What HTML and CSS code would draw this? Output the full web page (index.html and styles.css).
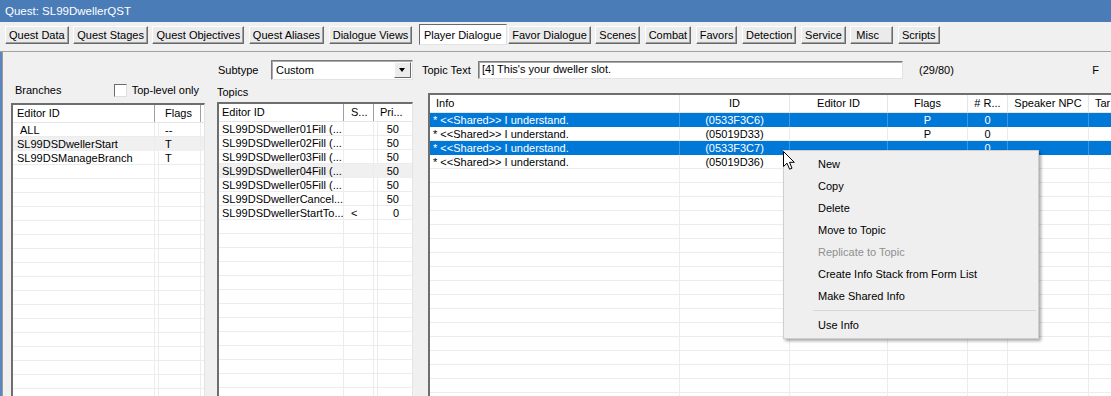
FILE: index.html
```html
<!DOCTYPE html>
<html lang="en">

<head>
    <meta charset="UTF-8" />
    <link rel="stylesheet" href="styles.css">
    <title>Quest: SL99DwellerQST</title>
</head>

<body>
    <div class="titlebar">Quest: SL99DwellerQST</div>

    <div class="tabs">
        <button class="tab">Quest Data</button>
        <button class="tab">Quest Stages</button>
        <button class="tab">Quest Objectives</button>
        <button class="tab">Quest Aliases</button>
        <button class="tab">Dialogue Views</button>
        <button class="tab active">Player Dialogue</button>
        <button class="tab">Favor Dialogue</button>
        <button class="tab">Scenes</button>
        <button class="tab">Combat</button>
        <button class="tab">Favors</button>
        <button class="tab">Detection</button>
        <button class="tab">Service</button>
        <button class="tab misc">Misc</button>
        <button class="tab">Scripts</button>
    </div>

    <div class="page">
        <!-- branches -->
        <div class="col branches">
            <div class="branch-head">
                <span>Branches</span>
                <label class="check"><span class="box"></span>Top-level only</label>
            </div>
            <div class="list branch-list">
                <div class="list-head">
                    <div class="hcell b-eid">Editor ID</div>
                    <div class="hcell b-flags">Flags</div>
                </div>
                <div class="list-body">
                    <div class="row"><span class="cell b-eid indent">ALL</span><span class="cell b-flags">--</span></div>
                    <div class="row hover"><span class="cell b-eid">SL99DSDwellerStart</span><span class="cell b-flags">T</span></div>
                    <div class="row"><span class="cell b-eid">SL99DSManageBranch</span><span class="cell b-flags">T</span></div>
                </div>
            </div>
        </div>

        <!-- topics -->
        <div class="col topics">
            <div class="subtype">
                <span class="subtype-label">Subtype</span>
                <div class="select">
                    <span>Custom</span>
                    <span class="arrow"></span>
                </div>
            </div>
            <div class="topics-label">Topics</div>
            <div class="list topic-list">
                <div class="list-head">
                    <div class="hcell t-eid">Editor ID</div>
                    <div class="hcell t-s">S...</div>
                    <div class="hcell t-pri">Pri...</div>
                </div>
                <div class="list-body">
                    <div class="row"><span class="cell t-eid">SL99DSDweller01Fill (...</span><span class="cell t-s"></span><span class="cell t-pri">50</span></div>
                    <div class="row"><span class="cell t-eid">SL99DSDweller02Fill (...</span><span class="cell t-s"></span><span class="cell t-pri">50</span></div>
                    <div class="row"><span class="cell t-eid">SL99DSDweller03Fill (...</span><span class="cell t-s"></span><span class="cell t-pri">50</span></div>
                    <div class="row hover"><span class="cell t-eid">SL99DSDweller04Fill (...</span><span class="cell t-s"></span><span class="cell t-pri">50</span></div>
                    <div class="row"><span class="cell t-eid">SL99DSDweller05Fill (...</span><span class="cell t-s"></span><span class="cell t-pri">50</span></div>
                    <div class="row"><span class="cell t-eid">SL99DSDwellerCancel...</span><span class="cell t-s"></span><span class="cell t-pri">50</span></div>
                    <div class="row"><span class="cell t-eid">SL99DSDwellerStartTo...</span><span class="cell t-s">&lt;</span><span class="cell t-pri">0</span></div>
                </div>
            </div>
        </div>

        <!-- infos -->
        <div class="col infos">
            <div class="topic-text">
                <span class="topic-label">Topic Text</span>
                <div class="textbox">[4] This's your dweller slot.</div>
                <span class="count">(29/80)</span>
                <span class="cut">F</span>
            </div>
            <div class="list info-list">
                <div class="list-head">
                    <div class="hcell i-info">Info</div>
                    <div class="hcell i-id center">ID</div>
                    <div class="hcell i-eid center">Editor ID</div>
                    <div class="hcell i-flags center">Flags</div>
                    <div class="hcell i-resp center"># R...</div>
                    <div class="hcell i-npc center">Speaker NPC</div>
                    <div class="hcell i-tar">Tar</div>
                </div>
                <div class="list-body">
                    <div class="row selected">
                        <span class="cell i-info">* &lt;&lt;Shared&gt;&gt; I understand.</span>
                        <span class="cell i-id center">(0533F3C6)</span>
                        <span class="cell i-eid"></span>
                        <span class="cell i-flags center">P</span>
                        <span class="cell i-resp center">0</span>
                        <span class="cell i-npc"></span>
                        <span class="cell i-tar"></span>
                    </div>
                    <div class="row">
                        <span class="cell i-info">* &lt;&lt;Shared&gt;&gt; I understand.</span>
                        <span class="cell i-id center">(05019D33)</span>
                        <span class="cell i-eid"></span>
                        <span class="cell i-flags center">P</span>
                        <span class="cell i-resp center">0</span>
                        <span class="cell i-npc"></span>
                        <span class="cell i-tar"></span>
                    </div>
                    <div class="row selected">
                        <span class="cell i-info">* &lt;&lt;Shared&gt;&gt; I understand.</span>
                        <span class="cell i-id center">(0533F3C7)</span>
                        <span class="cell i-eid"></span>
                        <span class="cell i-flags center"></span>
                        <span class="cell i-resp center">0</span>
                        <span class="cell i-npc"></span>
                        <span class="cell i-tar"></span>
                    </div>
                    <div class="row">
                        <span class="cell i-info">* &lt;&lt;Shared&gt;&gt; I understand.</span>
                        <span class="cell i-id center">(05019D36)</span>
                        <span class="cell i-eid"></span>
                        <span class="cell i-flags center">P</span>
                        <span class="cell i-resp center">0</span>
                        <span class="cell i-npc"></span>
                        <span class="cell i-tar"></span>
                    </div>
                </div>
            </div>
        </div>
    </div>

    <!-- right click menu -->
    <ul class="menu">
        <li>New</li>
        <li>Copy</li>
        <li>Delete</li>
        <li>Move to Topic</li>
        <li class="disabled">Replicate to Topic</li>
        <li>Create Info Stack from Form List</li>
        <li>Make Shared Info</li>
        <li class="sep"></li>
        <li>Use Info</li>
    </ul>

    <svg class="cursor" width="14" height="21" viewBox="0 0 14 21">
        <path d="M1.5 1.5 L1.5 16.5 L5 13.2 L7.6 19.2 L10 18.2 L7.5 12.3 L12.3 12.3 Z" fill="#fff" stroke="#000"
            stroke-width="1" stroke-linejoin="miter" />
    </svg>
</body>

</html>
```

FILE: styles.css
```css
* {
    margin: 0;
    padding: 0;
    box-sizing: border-box;
}

body {
    position: relative;
    width: 1111px;
    height: 396px;
    overflow: hidden;
    background: #f0f0f0;
    font-family: "Liberation Sans", Arial, sans-serif;
    font-size: 11px;
    color: #000;
}

.titlebar {
    height: 22px;
    line-height: 22px;
    padding-left: 5px;
    background: #4a7cb8;
    color: #fff;
    font-size: 11.5px;
}

/* tab buttons */

.tabs {
    display: flex;
    align-items: flex-start;
    gap: 4.6px;
    height: 30px;
    padding: 4px 0 0 5px;
    border-bottom: 1px solid #a0a0a0;
}

.tab {
    flex-shrink: 0;
    height: 18px;
    padding: 0 3px;
    font-family: inherit;
    font-size: 11px;
    color: #000;
    background: #ebebeb;
    border: 1px solid;
    border-color: #fff #696969 #696969 #fff;
    box-shadow: inset -1px -1px #a0a0a0;
    white-space: nowrap;
}

.tab.active {
    height: 21px;
    margin: -2px -3px 0 2px;
    padding: 0 4px;
    background: #fff;
    border-color: #696969 #e3e3e3 #e3e3e3 #696969;
    box-shadow: none;
}

.tab.misc {
    width: 43px;
    text-align: left;
    padding-left: 5px;
}

/* main area */

.page {
    display: flex;
    height: 344px;
    padding-left: 9px;
    border-left: 2px solid #5b86bd;
    box-shadow: inset 1px 0 #9a9a9a;
}

.col {
    display: flex;
    flex-direction: column;
    flex-shrink: 0;
}

.branches {
    width: 194px;
    margin-right: 12px;
    padding-top: 30px;
}

.branch-head {
    display: flex;
    justify-content: space-between;
    align-items: center;
    height: 16px;
    margin-bottom: 5px;
    padding: 0 6px 0 4px;
}

.check {
    display: flex;
    align-items: center;
    gap: 5px;
}

.box {
    width: 13px;
    height: 13px;
    background: #fff;
    border: 1px solid;
    border-color: #6b6b6b #dedede #dedede #6b6b6b;
}

.topics {
    width: 196px;
    padding-top: 8px;
}

.subtype {
    display: flex;
    align-items: center;
    height: 20px;
}

.subtype-label {
    width: 54px;
    padding-left: 1px;
}

.select {
    display: flex;
    justify-content: space-between;
    align-items: center;
    width: 142px;
    height: 20px;
    padding-left: 4px;
    background: #fff;
    border: 1px solid;
    border-color: #7a7a7a #e3e3e3 #e3e3e3 #7a7a7a;
    box-shadow: inset 1px 1px #a9a9a9;
}

.arrow {
    position: relative;
    width: 17px;
    height: 16px;
    margin-right: 1px;
    background: #ececec;
    border: 1px solid;
    border-color: #fff #696969 #696969 #fff;
}

.arrow::after {
    content: "";
    position: absolute;
    left: 4px;
    top: 5px;
    border-left: 3.5px solid transparent;
    border-right: 3.5px solid transparent;
    border-top: 4px solid #000;
}

.topics-label {
    height: 22px;
    line-height: 24px;
}

.infos {
    flex: 1 1 0;
    min-width: 0;
    margin-left: 9px;
    padding-top: 9px;
}

.topic-text {
    display: flex;
    align-items: center;
    height: 17px;
    margin-bottom: 15px;
}

.topic-label {
    width: 56px;
}

.textbox {
    width: 425px;
    height: 18px;
    line-height: 15px;
    padding-left: 3px;
    background: #fff;
    border: 1px solid;
    border-color: #7a7a7a #e3e3e3 #e3e3e3 #7a7a7a;
    box-shadow: inset 1px 1px #a9a9a9;
}

.count {
    margin-left: 16px;
}

.cut {
    margin-left: auto;
    margin-right: 12px;
}

/* list views */

.list {
    flex: 1;
    display: flex;
    flex-direction: column;
    overflow: hidden;
    background: #fff;
    border-left: 2px solid #6e6e6e;
    border-top: 2px solid #6e6e6e;
    border-right: 1px solid #e3e3e3;
}

.info-list {
    margin-left: 6px;
    margin-right: -20px;
}

.list-head {
    display: flex;
    flex-shrink: 0;
    height: 18px;
    border-bottom: 1px solid #e5e5e5;
}

.hcell {
    flex-shrink: 0;
    height: 17px;
    line-height: 17px;
    padding: 0 4px;
    white-space: nowrap;
    overflow: hidden;
    border-right: 1px solid #a0a0a0;
}

.info-list .hcell {
    border-right-color: #e5e5e5;
}

.list-body {
    flex: 1;
    background-repeat: no-repeat;
}

.row {
    display: flex;
    height: 14px;
    line-height: 14px;
}

.row.hover {
    background: #f0f0f0;
}

.row.selected {
    background: #0078d7;
    color: #fff;
}

.cell {
    flex-shrink: 0;
    height: 14px;
    padding: 0 4px;
    white-space: nowrap;
    overflow: hidden;
    border-right: 1px solid #ececec;
}

.row.selected .cell {
    border-right-color: #3d97e0;
}

.center {
    text-align: center;
}

/* branch columns */

.b-eid {
    width: 142px;
}

.b-flags {
    width: 46px;
    padding-left: 10px;
}

.cell.indent {
    padding-left: 7px;
}

.branch-list .list-body {
    background-image:
        linear-gradient(#ececec, #ececec),
        linear-gradient(#ececec, #ececec),
        linear-gradient(#ececec, #ececec),
        repeating-linear-gradient(to bottom, transparent 0 13px, #ececec 13px 14px);
    background-size: 1px 100%, 1px 100%, 1px 100%, 100% 100%;
    background-position: 141px 0, 145px 0, 187px 0, 0 0;
}

/* topic columns */

.t-eid {
    width: 125px;
    padding-left: 3px;
}

.t-s {
    width: 30px;
    padding-left: 7px;
}

.t-pri {
    width: 39px;
    padding-left: 6px;
}

.cell.t-pri {
    text-align: right;
    padding-right: 13px;
}

.topic-list .list-body {
    background-image:
        linear-gradient(#ececec, #ececec),
        linear-gradient(#ececec, #ececec),
        linear-gradient(#ececec, #ececec),
        linear-gradient(#ececec, #ececec),
        repeating-linear-gradient(to bottom, transparent 0 13px, #ececec 13px 14px);
    background-size: 1px 100%, 1px 100%, 1px 100%, 1px 100%, 100% 100%;
    background-position: 124px 0, 154px 0, 158px 0, 193px 0, 0 0;
}

/* info columns */

.i-info {
    width: 250px;
}

.hcell.i-info {
    padding-left: 6px;
}

.cell.i-info {
    padding-left: 3px;
}

.i-id {
    width: 110px;
}

.i-eid {
    width: 98px;
}

.i-flags {
    width: 80px;
}

.i-resp {
    width: 40px;
}

.i-npc {
    width: 81px;
}

.i-tar {
    width: 60px;
    padding-left: 6px;
}

.info-list .list-body {
    background-image:
        linear-gradient(#ececec, #ececec),
        linear-gradient(#ececec, #ececec),
        linear-gradient(#ececec, #ececec),
        linear-gradient(#ececec, #ececec),
        linear-gradient(#ececec, #ececec),
        linear-gradient(#ececec, #ececec),
        repeating-linear-gradient(to bottom, transparent 0 13px, #ececec 13px 14px);
    background-size: 1px 100%, 1px 100%, 1px 100%, 1px 100%, 1px 100%, 1px 100%, 100% 100%;
    background-position: 249px 0, 359px 0, 457px 0, 537px 0, 577px 0, 658px 0, 0 0;
}

/* context menu */

.menu {
    position: absolute;
    left: 783px;
    top: 150px;
    width: 256px;
    padding: 2px 0 2px;
    list-style: none;
    background: #efefef;
    border: 1px solid #cfcfcf;
    box-shadow: 2px 2px 3px rgba(0, 0, 0, 0.35);
    font-family: "Liberation Sans", Arial, sans-serif;
    font-size: 11px;
}

.menu li {
    height: 22px;
    line-height: 22px;
    padding-left: 34px;
}

.menu li.disabled {
    color: #8f8f8f;
}

.menu li.sep {
    height: 7px;
    margin: 0 2px 0 29px;
    background: linear-gradient(#d7d7d7, #d7d7d7) no-repeat 0 3px / 100% 1px;
}

.cursor {
    position: absolute;
    left: 782px;
    top: 150px;
}
```
